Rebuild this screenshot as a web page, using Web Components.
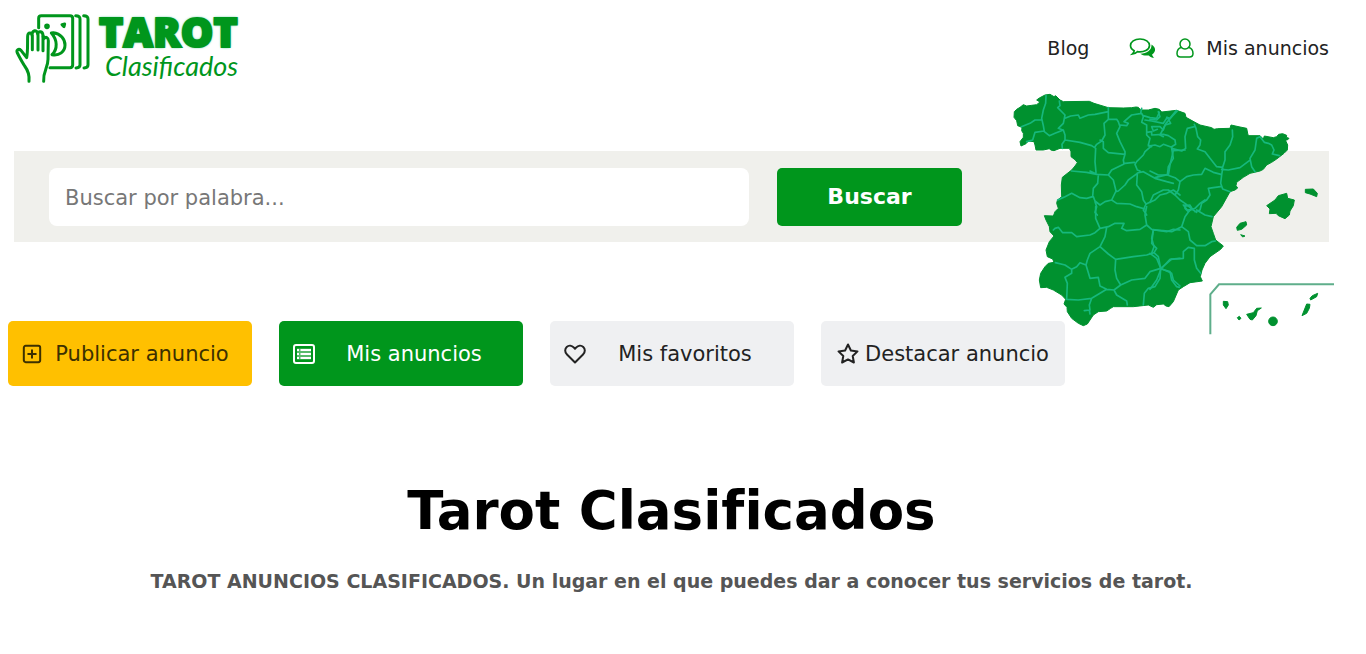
<!DOCTYPE html>
<html lang="es">
<head>
<meta charset="utf-8">
<meta name="viewport" content="width=device-width, initial-scale=1">
<title>Tarot Clasificados</title>
<style>
  body { margin: 0; background: #fff; color: #222; font-family: "DejaVu Sans", Verdana, sans-serif; --green: #00961c; }
</style>
</head>
<body>
<tarot-page></tarot-page>

<template id="t-page">
  <style>
    :host { display: block; padding: 0 37px 56px 14px; }
  </style>
  <site-header></site-header>
  <main>
    <search-bar><spain-map></spain-map></search-bar>
    <action-list>
      <action-link kind="gold"><svg slot="icon" viewBox="0 0 22 22" width="20" height="20" fill="none" stroke="currentColor" stroke-width="2.2"><rect x="2" y="2" width="18" height="18" rx="2"/><path d="M11 6v10M6 11h10"/></svg>Publicar anuncio</action-link>
      <action-link kind="green"><svg slot="icon" viewBox="0 0 22 20" width="22" height="20"><rect x="1" y="1" width="20" height="18" rx="2" fill="none" stroke="currentColor" stroke-width="2"/><path d="M4 4.500h14v11H4z" fill="currentColor" opacity=".35"/><path d="M4 6h2M4 10h2M4 14h2M7.500 6H18M7.500 10H18M7.500 14H18" stroke="currentColor" stroke-width="1.800"/></svg>Mis anuncios</action-link>
      <action-link><svg slot="icon" viewBox="0 0 22 22" width="22" height="22" fill="none" stroke="currentColor" stroke-width="2" stroke-linejoin="round"><path d="M11 19.500 3 11.500C.5 9 .8 5.600 2.700 3.900c2.200-2 5.200-1.400 7 .5L11 5.800l1.300-1.400c1.800-1.900 4.800-2.500 7-.5 1.900 1.700 2.200 5.100-.3 7.600z"/></svg>Mis favoritos</action-link>
      <action-link><svg slot="icon" viewBox="0 0 24 24" width="24" height="24" fill="none" stroke="currentColor" stroke-width="2" stroke-linejoin="round"><path d="m13 2.500 2.900 6 6.600.9-4.800 4.600 1.200 6.500-5.900-3.100-5.900 3.100 1.200-6.500L3.500 9.400l6.600-.9z"/></svg>Destacar anuncio</action-link>
    </action-list>
    <page-intro>
      <span slot="title">Tarot Clasificados</span>
      TAROT ANUNCIOS CLASIFICADOS. Un lugar en el que puedes dar a conocer tus servicios de tarot.
    </page-intro>
  </main>
</template>

<template id="t-header">
  <style>
    :host { display: block; }
    header { display: flex; justify-content: space-between; align-items: center; height: 95px; }
    nav { display: flex; align-items: center; }
    a { display: flex; align-items: center; color: inherit; text-decoration: none; font-size: 19px; line-height: 24px; }
    .chat { margin-left: 40px; color: var(--green); }
    .user { margin-left: 20px; gap: 12px; }
    .user svg { color: var(--green); }
  </style>
  <header>
    <site-logo></site-logo>
    <nav>
      <a href="#blog">Blog</a>
      <a class="chat" href="#chat" aria-label="Mensajes">
        <svg viewBox="0 0 27 22" width="27" height="22"><path d="M11 2C5.500 2 1.500 4.900 1.500 8.500c0 2.200 1.400 4 3.700 5.200-.2 1.500-.8 2.500-1.700 3.300 2.200-.3 3.800-1.200 4.800-2.300 6.600 1 12.200-2 12.200-6.200C20.500 4.900 16.500 2 11 2z" fill="none" stroke="currentColor" stroke-width="1.700"/><path d="M22.500 7.500c4.700 2.700 4.600 7.500.6 9.900.3 1.400 1 2.400 2.200 3.400-2.400 0-4.200-.8-5.500-2.400-3.300.5-6.400-.1-8.500-1.700 6.800 0 11.500-3.500 11.200-9.200z" fill="currentColor"/></svg>
      </a>
      <a class="user" href="#anuncios">
        <svg viewBox="0 0 18 20" width="18" height="20" fill="none" stroke="currentColor" stroke-width="1.500"><circle cx="9" cy="6" r="5"/><path d="M5.500 9.500C2.800 10 1 12 1 15.500 1 18 2.200 19 4.500 19h9c2.300 0 3.500-1 3.500-3.500 0-3.500-1.800-5.500-4.500-6"/></svg>
        Mis anuncios
      </a>
    </nav>
  </header>
</template>

<template id="t-logo">
  <style>
    :host { display: block; color: var(--green); }
    a { display: flex; gap: 8px; color: inherit; text-decoration: none; }
    .words { display: flex; flex-direction: column; padding-top: 2px; }
    .big { font: 800 41px/36px "Open Sans", sans-serif; -webkit-text-stroke: 2px currentColor; text-shadow: 0 0 2px #19b67c, 0 0 3px #19b67c; }
    .small { font: italic 27px/34px Lato, sans-serif; padding-left: 6px; }
  </style>
  <a href="#inicio">
    <svg viewBox="45 34 231 219" width="77" height="73" fill="none" stroke="currentColor" stroke-width="9" stroke-linecap="round" stroke-linejoin="round">
      <path d="M119 84V56q0-8 8-8h86q8 0 8 8v140q0 8-8 8h-60"/>
      <path d="M230 48q13 0 13 10v138q0 8-12 9M254 48q13 0 13 10v138q0 8-12 9"/>
      <path d="M157 100c18 20 20 48 2 65 22 4 39-9 39-29 0-18-13-34-35-37z"/>
      <circle cx="144" cy="80" r="4"/><path d="m189 75 8-2-2 8z"/>
      <path fill="#fff" d="M90 245c2-20-4-34-13-46-9-14-16-28-22-39-4-9 4-14 11-8l17 22c4-20 2-40 3-65 1-12 12-11 13-2 0-16 15-19 17-4 3-11 15-8 16 4l2 10c7-7 14-4 14 6l-1 56c0 27-15 34-13 66"/>
      <path d="M100 108v42M117 105v46M132 110v43"/>
    </svg>
    <span class="words"><span class="big">TAROT</span><span class="small">Clasificados</span></span>
  </a>
</template>

<template id="t-search">
  <style>
    :host { display: block; position: relative; margin-top: 56px; background: #f0f0ec; }
    form { display: flex; gap: 28px; padding: 17px 367px 16px 35px; }
    input { flex: 1; min-width: 0; box-sizing: border-box; height: 58px; padding: 2px 16px 0; border: 0; border-radius: 8px; background: #fff; font: 21px/26px "DejaVu Sans", Verdana, sans-serif; color: #222; }
    input::placeholder { color: #777; opacity: 1; }
    button { width: 185px; border: 0; border-radius: 5px; background: var(--green); color: #fff; font: bold 22px/26px "DejaVu Sans", Verdana, sans-serif; }
    ::slotted(spain-map) { position: absolute; right: -11px; top: -61px; }
  </style>
  <form>
    <input type="text" aria-label="Buscar por palabra" placeholder="Buscar por palabra...">
    <button type="button">Buscar</button>
  </form>
  <slot></slot>
</template>

<template id="t-map">
  <style>
    :host { display: block; }
    svg { display: block; }
    .land { fill: #00912f; stroke: #00912f; stroke-width: 3; stroke-linejoin: round; }
    .edge { fill: none; stroke: #16b87d; stroke-width: 5; stroke-linejoin: round; stroke-linecap: round; }
    .frame { fill: none; stroke: #5fae8b; stroke-width: 6; }
  </style>
  <svg viewBox="0 0 990 750" width="330" height="250" role="img" aria-label="Mapa de España">
    <path class="land" d="M80 30 88 24 105 15 120 13 132 20 137 17 150 30 160 35 238 34 252 40 295 53 340 54 365 53 378 51 385 52 392 60 415 60 435 55 448 58 455 66 500 61 525 70 528 82 555 97 570 105 605 113 612 118 622 116 660 115 663 105 690 111 710 115 714 135 717 137 750 137 760 147 763 138 790 143 800 140 806 133 818 131 830 136 829 142 837 145 832 150 826 150 833 165 832 180 822 190 800 207 785 217 770 225 760 238 750 243 720 250 700 262 680 277 678 287 683 294 675 300 660 305 635 350 610 380 603 410 610 430 617 450 640 468 632 478 600 500 585 520 576 540 571 560 577 573 540 578 520 590 505 600 490 635 477 650 468 648 460 642 440 644 430 652 415 645 370 650 310 650 302 655 290 663 265 665 250 675 240 690 232 702 220 707 205 700 185 685 172 665 171 652 162 642 167 628 155 615 130 600 110 592 92 593 88 570 92 550 105 530 115 520 132 517 128 507 112 500 108 480 118 455 132 438 120 425 118 410 108 390 103 377 130 378 135 365 145 355 140 340 142 331 155 320 154 285 157 262 185 240 195 228 202 218 196 210 183 200 183 185 178 175 150 175 132 182 122 180 118 176 100 180 78 180 75 165 72 155 55 153 48 161 33 168 30 155 40 142 40 130 35 122 36 112 23 107 20 92 12 82 13 65 20 58 30 52 40 44 50 48 65 46 80 44 90 36z"/>
    <g class="edge">
      <g transform="translate(-30 -15)">
        <path d="M138 32 137 55 130 75 125 100 130 122 133 140 148 152 165 145 190 135 195 150 195 165 186 178 187 190M125 105 105 105 90 115 64 125M132 138 105 142 98 165 80 170M178 48 180 62 173 68 195 90 190 115 175 130 190 136M195 100 212 93 235 90 240 100 265 90 285 88 325 80M325 68 325 103 312 115 315 150 305 168 290 178 285 185M195 165 240 172 275 182 287 190 285 230 288 262M325 103 350 103 355 110 360 125 350 145 360 170 375 200 375 208M300 165 310 170 310 190 325 203 375 208M360 120 380 122 385 115 372 110 395 90 425 85 430 95 425 112 440 120 440 150 450 160 445 180 455 185M422 84 425 70M430 92 450 98 470 100 478 82M435 105 455 108 490 115 502 97M500 97 510 100 528 77M502 97 512 115 495 120 490 135 480 125 455 125 460 138 472 133M440 142 455 140 455 150 490 148 505 152 525 165 527 178 515 185M445 183 465 180 480 185 490 178 515 187 520 197M452 185 435 200 430 210 410 230 405 238 412 255M375 208 370 225 372 237 335 255 325 270 290 268 260 262 215 258M375 235 403 232M270 258 295 270M295 270 293 295 280 310 278 335 260 340 240 338 215 325 195 335 173 345M325 270 340 285 348 318 335 345 315 350 300 360 285 348 280 335M412 265 385 285 375 300 355 318 348 320M412 265 410 300 425 320 430 345 438 357M412 264 430 260 465 280 500 290 520 295M412 255 420 258M285 350 290 365 285 382 292 390M335 345 350 355 390 357 410 365 435 372"/>
        <path d="M438 357 465 345 480 330 500 325 520 315 540 330M520 197 510 240 505 270M505 268 465 278M520 197 555 195M438 357 430 375 440 390"/>
      </g>
      <g transform="translate(420 -15)">
        <path d="M25 80 30 95 20 105 0 103M82 78 68 92 48 115 30 150 40 155M133 125 112 130 105 155 107 190 95 198 65 190 70 220 55 245 52 270 75 278 90 290M133 118 138 130 143 155 152 165 150 180 142 192 165 200 180 220 200 245 218 247M247 135 248 155 240 180 225 200 225 225 218 247M330 155 320 160 315 195 300 220 305 245 315 260M343 172 355 175 365 180 372 195 367 207 388 212M330 155 343 172M215 253 235 255 270 248 298 227M218 250 215 270 212 295 218 312 240 320M52 270 25 270 0 258M90 290 110 275 130 270 155 268 165 250 190 262 213 268M90 290 87 305 85 315 75 330 55 315 40 315 10 330 0 352M75 330 90 345 105 355 130 375 140 382M212 305 190 308 175 310 180 330 170 345 155 355 150 375 135 380M105 362 120 360 125 370 115 380 105 370z"/>
      </g>
      <g transform="translate(-30 330)">
        <path d="M160 90 165 85 175 82 188 98 215 98 230 110 270 105 285 98 300 85 325 80 345 70 372 70 365 85 380 92 420 88 440 75M300 85 287 55 287 20M440 75 435 45 440 20M440 75 455 88 500 95 520 88 540 90M320 82 315 110 300 140 270 160 262 180 258 195 240 188 230 200 215 208 195 195 166 188M300 140 325 162 347 178 400 170 440 165 462 158M460 90 455 130 470 145 462 158 475 170 482 205M347 178 345 210 350 235 362 255 342 270 320 268 300 258 295 232 270 235 258 195M362 255 395 240 435 235 450 215 482 205M482 205 500 190 515 177 540 175M482 205 515 220 520 240 540 258M482 205 480 235 465 260 445 265 433 280 430 315M342 270 350 285 380 303 382 315M320 268 300 280 275 295 235 300 200 298M215 208 215 220 195 232 202 250 200 298M275 295 268 315 270 330 253 332M268 330 270 342"/>
      </g>
      <g transform="translate(420 330)">
        <path d="M140 30 165 45 186 50M165 0 150 10 135 25 118 32M118 32 105 50 95 80 65 95 40 92 10 90 5 115 12 140 5 160M95 80 115 95 120 120 140 137 165 137 185 125 196 123M133 145 115 142 100 155 100 175 60 178 33 207M133 145 133 180 140 205 152 220M33 207 60 215 65 240 80 260 88 262M33 207 20 175 0 160M33 207 20 240 0 268M100 15 120 18 128 28 112 30z"/>
      </g>
    </g>
    <g class="land">
      <path transform="translate(420 -15)" d="M350 362 375 345 385 332 410 325 413 340 433 345 430 362 420 378 418 390 405 401 385 392 378 385 358 386 360 372zM466 313 490 312 502 325 500 335 480 327 466 323z"/>
      <path transform="translate(420 330)" d="M260 82 270 70 288 65 290 75 275 88 262 91zM272 104 285 108 278 111zM220 304 233 305 235 315 228 326 220 315zM262 353 268 349 273 355 267 360zM290 343 310 338 320 325 334 324 322 332 318 347 307 360 300 358zM480 295 487 287 503 280 500 290 482 300zM470 312 480 313 478 325 470 340 456 347z"/>
      <circle cx="789" cy="694" r="13"/>
    </g>
    <path class="frame" d="M601 733V613L627 583H972"/>
  </svg>
</template>

<template id="t-actions">
  <style>
    :host { display: grid; grid-template-columns: repeat(4, minmax(0, 244px)); gap: 27px; margin: 79px 0 0 -6px; }
  </style>
  <slot></slot>
</template>

<template id="t-action">
  <style>
    :host { display: block; }
    a { display: flex; align-items: center; gap: 4px; height: 65px; box-sizing: border-box; padding: 0 14px; border-radius: 5px; background: #eff0f2; color: #222; text-decoration: none; font-size: 21px; line-height: 26px; white-space: nowrap; }
    :host([kind="gold"]) a { background: #ffc000; color: #3c3000; }
    :host([kind="green"]) a { background: var(--green); color: #fff; }
    .label { flex: 1; text-align: center; }
  </style>
  <a href="#"><slot name="icon"></slot><span class="label"><slot></slot></span></a>
</template>

<template id="t-intro">
  <style>
    :host { display: block; text-align: center; }
    h1 { margin: 93px 0 0; color: #000; font-size: 53px; line-height: 64px; }
    p { margin: 24px 0 0; color: #555; font-weight: bold; font-size: 19px; line-height: 28px; }
  </style>
  <h1><slot name="title"></slot></h1>
  <p><slot></slot></p>
</template>

<script>
  const define = (name, templateId) => customElements.define(name, class extends HTMLElement {
    constructor() {
      super();
      this.attachShadow({ mode: 'open' }).append(document.getElementById(templateId).content.cloneNode(true));
    }
  });
  define('site-logo', 't-logo');
  define('site-header', 't-header');
  define('spain-map', 't-map');
  define('search-bar', 't-search');
  define('action-link', 't-action');
  define('action-list', 't-actions');
  define('page-intro', 't-intro');
  define('tarot-page', 't-page');
</script>
</body>
</html>
